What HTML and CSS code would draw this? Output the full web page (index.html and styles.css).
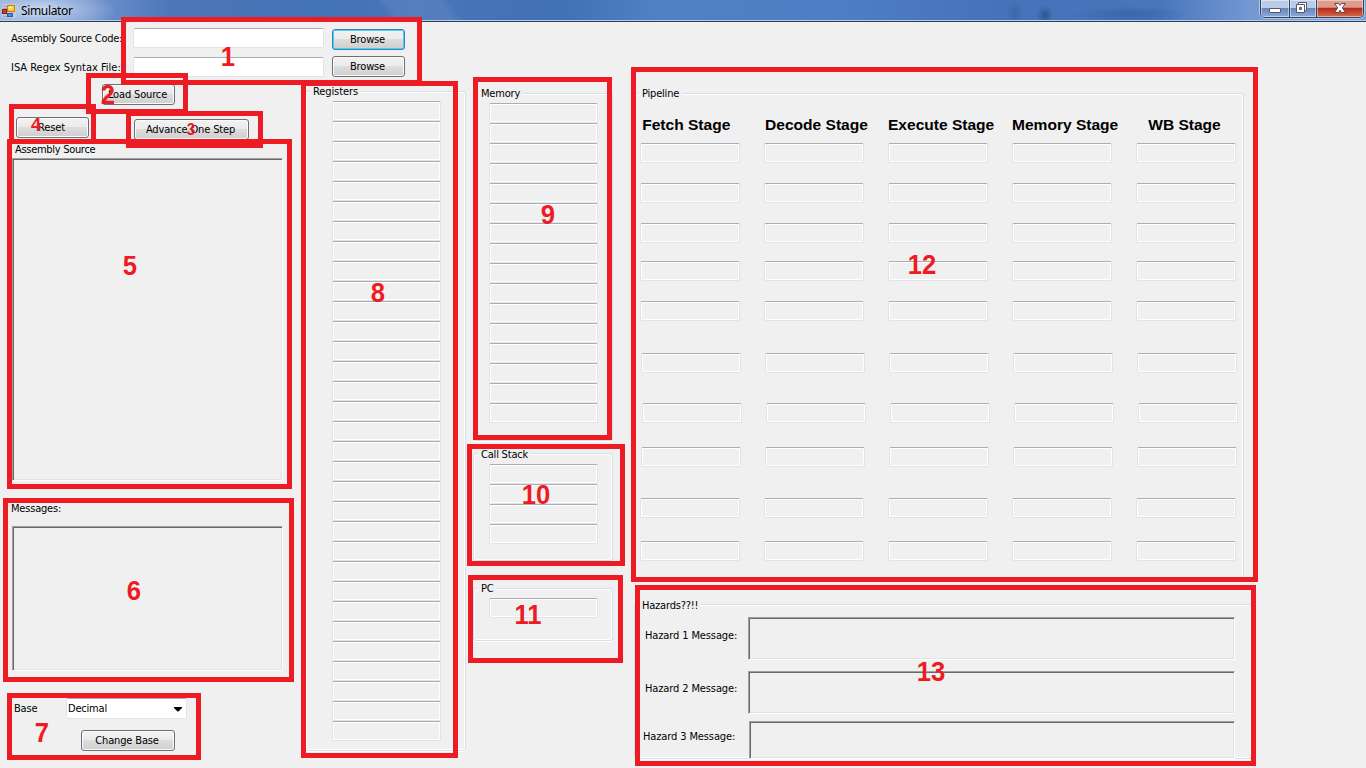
FILE: index.html
```html
<!DOCTYPE html>
<html lang="en">
<head>
<meta charset="utf-8">
<title>Simulator</title>
<link rel="stylesheet" href="styles.css">
</head>
<body>
<header class="titlebar">
  <svg class="app-icon" width="14" height="16" viewBox="0 0 14 16">
    <rect x="0" y="0" width="14" height="14" fill="#c9cdd2" opacity=".75"/>
    <path d="M1 2.500h4M1 4.500h4M1 12.500h4" stroke="#8fa9cc"/>
    <rect x="5.500" y="1.500" width="7" height="6" fill="#ffc928" stroke="#b98512"/>
    <rect x="6.500" y="2.500" width="4" height="2" fill="#fff1a8"/>
    <rect x=".5" y="5.500" width="4" height="4" fill="#d83b2c" stroke="#8c1b16"/>
    <rect x="5.500" y="9.500" width="5" height="3" fill="#4b86e6" stroke="#2b59ad"/>
  </svg>
  <span class="app-title">Simulator</span>
  <div class="window-controls">
    <span class="control minimize"><svg width="28" height="17" viewBox="0 0 28 17"><rect x="8.500" y="8.500" width="11" height="4" rx=".5" fill="#fff" stroke="#555b6c"/></svg></span>
    <span class="control restore"><svg width="26" height="17" viewBox="0 0 26 17"><path d="M8.500 2.500h8v8h-8z" fill="#fff" stroke="#555b6c"/><path d="M6.500 4.500h8v8h-8z" fill="#fff" stroke="#555b6c"/><path d="M9.500 7.500h2v2h-2z" fill="#6e8fc0" stroke="#555b6c"/></svg></span>
    <span class="control close"><svg width="46" height="17" viewBox="0 0 46 17"><path d="M17.500 3.500h4l1.500 2 1.500-2h4l-3.200 4.300 3.200 4.700h-4l-1.500-2.200-1.500 2.200h-4l3.200-4.700z" fill="#fff" stroke="#5b4550"/></svg></span>
  </div>
</header>

<main class="workspace">
  <section class="left-area">
    <div class="file-form">
      <div class="file-row">
        <label class="text file-label source">Assembly Source Code:</label>
        <span class="field file-input"></span>
        <button class="button browse focused">Browse</button>
      </div>
      <div class="file-row">
        <label class="text file-label syntax">ISA Regex Syntax File:</label>
        <span class="field file-input"></span>
        <button class="button browse second">Browse</button>
      </div>
    </div>
    <div class="left-columns">
      <div class="controls">
        <button class="button load">Load Source</button>
        <div class="step-row">
          <button class="button reset">Reset</button>
          <button class="button advance">Advance One Step</button>
        </div>
        <span class="text source-title">Assembly Source</span>
        <div class="sunken source-panel"></div>
        <span class="text messages-title">Messages:</span>
        <div class="sunken messages-panel"></div>
        <div class="base-row">
          <span class="text base-label">Base</span>
          <div class="field combo"><span class="text decimal">Decimal</span><svg width="8" height="5" viewBox="0 0 8 5"><path d="M0 0h8v1L4.500 4.500h-1L0 1z"/></svg></div>
        </div>
        <button class="button change">Change Base</button>
      </div>
      <div class="group registers">
        <span class="text legend">Registers</span>
        <div class="stack" data-fields="32"></div>
      </div>
    </div>
  </section>

  <section class="middle-area">
    <div class="group memory"><span class="text legend">Memory</span><div class="stack" data-fields="16"></div></div>
    <div class="group callstack"><span class="text legend">Call Stack</span><div class="stack" data-fields="4"></div></div>
    <div class="group pc"><span class="text legend">PC</span><div class="stack" data-fields="1"></div></div>
  </section>

  <section class="right-area">
    <div class="group pipeline">
      <span class="text legend">Pipeline</span>
      <div class="stage-names">
        <span class="fetch">Fetch Stage</span><span class="decode">Decode Stage</span><span class="execute">Execute Stage</span><span class="mem">Memory Stage</span><span class="wb">WB Stage</span>
      </div>
      <div class="stage-rows">
        <div class="stage-row"></div>
        <div class="stage-row gap20"></div>
        <div class="stage-row gap20"></div>
        <div class="stage-row gap18"></div>
        <div class="stage-row gap20"></div>
        <div class="stage-row gap32 shift1"></div>
        <div class="stage-row gap30 shift2"></div>
        <div class="stage-row gap24 shift1"></div>
        <div class="stage-row gap31"></div>
        <div class="stage-row gap23"></div>
      </div>
    </div>
    <div class="group hazards">
      <span class="text legend">Hazards??!!</span>
      <div class="hazard-row"><span class="text">Hazard 1 Message:</span><div class="sunken"></div></div>
      <div class="hazard-row"><span class="text">Hazard 2 Message:</span><div class="sunken"></div></div>
      <div class="hazard-row third"><span class="text">Hazard 3 Message:</span><div class="sunken"></div></div>
    </div>
  </section>
</main>

<!-- Numbered callouts over the window -->
<div class="callouts">
  <div class="callout c1"></div><b class="num n1">1</b>
  <div class="callout c2"></div><b class="num n2">2</b>
  <div class="callout c3"></div><b class="num n3">3</b>
  <div class="callout c4"></div><b class="num n4">4</b>
  <div class="callout c5"></div><b class="num n5">5</b>
  <div class="callout c6"></div><b class="num n6">6</b>
  <div class="callout c7"></div><b class="num n7">7</b>
  <div class="callout c8"></div><b class="num n8">8</b>
  <div class="callout c9"></div><b class="num n9">9</b>
  <div class="callout c10"></div><b class="num n10">10</b>
  <div class="callout c11"></div><b class="num n11">11</b>
  <div class="callout c12"></div><b class="num n12">12</b>
  <div class="callout c13"></div><b class="num n13">13</b>
</div>
<script src="fields.js"></script>
</body>
</html>
```
FILE: fields.js
```js
function addFields(parent, count) {
  for (let i = 0; i < count; i++) {
    const field = document.createElement('span');
    field.className = 'field';
    parent.appendChild(field);
  }
}
document.querySelectorAll('.stack').forEach(el => addFields(el, Number(el.dataset.fields)));
document.querySelectorAll('.stage-row').forEach(el => addFields(el, 5));
```
FILE: styles.css
```css
* { box-sizing: border-box; }
body {
  margin: 0;
  width: 1366px;
  height: 768px;
  overflow: hidden;
  position: relative;
  background: #f0f0f0;
  color: #000;
  font: 11px/14px "DejaVu Sans Condensed", "DejaVu Sans", sans-serif;
}

/* Title bar */
.titlebar {
  display: flex;
  height: 22px;
  padding-left: 2px;
  border-bottom: 1px solid #2c3c5c;
  box-shadow: inset 0 -1px #bccbe4;
  background:
    radial-gradient(ellipse 75px 22px at 42px 10px, rgba(225,234,248,.8), rgba(200,216,240,.45) 50%, transparent),
    radial-gradient(ellipse 8px 9px at 1045px 15px, rgba(36,75,135,.8), transparent),
    radial-gradient(ellipse 8px 12px at 1015px 12px, rgba(50,90,155,.5), transparent),
    radial-gradient(ellipse 60px 8px at 1130px 14px, rgba(48,91,158,.6), transparent),
    linear-gradient(55deg, transparent 320px, rgba(255,255,255,.07) 328px 372px, transparent 380px),
    linear-gradient(90deg, #8facdc 0, #7093cd 90px, #4c77b8 170px, #4472b7 320px, #4874ba 420px, #4270b5 560px, #5280c5 660px, #4f7dc3 850px, #4572b8 1000px, #4875bb 1160px, #7398d2 1250px, #7da0d8 1366px);
}
.app-icon { margin-top: 4px; flex: none; }
.app-title {
  margin: 3px 0 0 5px;
  font: 12px/16px "Noto Sans", sans-serif;
  letter-spacing: -.35px;
}
.window-controls {
  display: flex;
  width: 104px;
  height: 18px;
  margin: 0 2px 0 auto;
  border: 1px solid #35425f;
  border-top: 0;
  border-radius: 0 0 5px 5px;
  overflow: hidden;
  box-shadow: 0 0 0 1px rgba(205,221,245,.65);
}
.control {
  box-shadow: inset 0 0 0 1px rgba(255,255,255,.45);
  background: linear-gradient(#b9cbe6 0 45%, #6588bb 50%, #8dabd8);
}
.control svg { display: block; }
.minimize { width: 28px; }
.restore { width: 27px; border-left: 1px solid #35425f; }
.close { width: 47px; border-left: 1px solid #35425f; background: linear-gradient(#dd9c8c 0 42%, #b92c1b 50%, #d36b4c); }

/* Shared controls */
.text { white-space: nowrap; letter-spacing: -.2px; }
.field {
  display: block;
  height: 20px;
  border: 1px solid #e2e3ea;
  border-top-color: #abadb3;
  border-radius: 2px;
  box-shadow: inset 0 0 0 1px #fff;
}
.button {
  display: block;
  width: 73px;
  height: 21px;
  padding: 1px 2px 0 0;
  border: 1px solid #707070;
  border-radius: 3px;
  box-shadow: inset 0 0 0 1px #fafafa;
  background: linear-gradient(#f2f2f2, #ebebeb 48%, #dddddd 50%, #cfcfcf);
  color: #000;
  font: inherit;
  letter-spacing: -.15px;
  line-height: 18px;
  text-align: center;
}
.focused { border-color: #3c7fb1; box-shadow: inset 0 0 0 1px #48d1f5; }
.sunken {
  border: 1px solid;
  border-color: #a0a0a0 #fff #fff #a0a0a0;
  box-shadow: inset 1px 1px #696969, inset -1px -1px #e3e3e3;
}
.group {
  position: relative;
  border: 1px solid #d5dfe5;
  border-radius: 3px;
  box-shadow: inset 0 0 0 1px #fff, 0 1px #fff;
}
.legend {
  position: absolute;
  top: -7px;
  left: 4px;
  padding: 0 3px;
  background: #f0f0f0;
}

/* Window body */
.workspace { display: flex; height: 746px; }
.left-area { width: 473px; }
.file-form { height: 62px; padding: 6px 0 0 11px; }
.file-row { display: flex; height: 29px; }
.file-label { width: 122px; padding-top: 4px; }
.source { letter-spacing: -.26px; }
.syntax { letter-spacing: -.02px; }
.file-input { width: 191px; margin-right: 8px; background: #fff; }
.browse { margin-top: 1px; }
.second { margin-top: -1px; }
.left-columns { display: flex; height: 684px; }
.controls { width: 305px; }
.load { margin-left: 102px; }
.step-row { display: flex; height: 37px; padding: 12px 0 0 16px; }
.advance { width: 115px; margin: 2px 0 0 45px; }
.source-title, .messages-title { display: block; height: 16px; margin-left: 15px; padding-top: 1px; }
.source-title { letter-spacing: -.3px; }
.source-panel { width: 271px; height: 323px; margin-left: 12px; }
.messages-title { height: 25px; margin: 20px 0 0 11px; }
.messages-panel { width: 271px; height: 145px; margin-left: 12px; }
.base-row { display: flex; margin: 27px 0 0 14px; }
.base-label { width: 52px; padding-top: 4px; }
.combo { display: flex; align-items: center; justify-content: space-between; width: 121px; height: 21px; padding: 0 4px 0 1px; background: #fff; }
.combo svg { margin-top: 2px; }
.change { width: 94px; margin: 11px 0 0 81px; }

.stack .field { width: 109px; }
.registers { width: 161px; height: 660px; margin-top: 7px; padding: 9px 0 0 26px; }
.registers .legend { letter-spacing: -.1px; }
.middle-area { width: 161px; padding-top: 71px; }
.middle-area .group { width: 140px; padding: 9px 0 0 15px; }
.memory { height: 348px; }
.middle-area .callstack { height: 108px; margin-top: 12px; padding-top: 10px; }
.callstack .legend { top: -6px; }
.pc { height: 53px; margin-top: 27px; }

.right-area { width: 620px; padding-top: 71px; }
.pipeline { width: 610px; height: 486px; padding: 23px 0 0 5px; }
.stage-names {
  display: grid;
  grid-template-columns: repeat(5, 124px);
  height: 26px;
  font: bold 14px/16px "Liberation Sans", sans-serif;
  white-space: nowrap;
}
.stage-names span { padding-left: 2px; transform: scaleX(1.11); transform-origin: 0 0; }
.stage-names .decode { padding-left: 1px; }
.stage-names .execute, .stage-names .mem { padding-left: 0; }
.stage-names .wb { padding-left: 11px; }
.stage-row { display: flex; gap: 24px; }
.stage-row .field { width: 100px; }
.gap18 { margin-top: 18px; }
.gap20 { margin-top: 20px; }
.gap23 { margin-top: 23px; }
.gap24 { margin-top: 24px; }
.gap30 { margin-top: 30px; }
.gap31 { margin-top: 31px; }
.gap32 { margin-top: 32px; }
.shift1 { padding-left: 1px; }
.shift2 { padding-left: 2px; }
.hazards { width: 618px; height: 155px; margin-top: 25px; padding: 12px 0 0 10px; }
.hazards .legend { top: -6px; }
.hazard-row { display: flex; margin-bottom: 11px; }
.hazard-row .text { width: 103px; padding-top: 12px; letter-spacing: -.12px; }
.hazard-row .sunken { width: 487px; height: 43px; }
.hazard-row:nth-of-type(2) .text { padding-top: 11px; }
.third { margin: -4px 0 0 -2px; }
.third .text { width: 106px; padding-top: 9px; }
.third .sunken { width: 486px; height: 38px; }

/* Callouts */
.callouts { position: absolute; inset: 0; }
.callout { position: absolute; border: 5px solid #ed1c24; }
.c1 { left: 121px; top: 17px; width: 301px; height: 68px; }
.c2 { left: 86px; top: 73px; width: 102px; height: 41px; }
.c3 { left: 126px; top: 111px; width: 137px; height: 37px; }
.c4 { left: 9px; top: 104px; width: 87px; height: 40px; }
.c5 { left: 7px; top: 139px; width: 285px; height: 350px; }
.c6 { left: 3px; top: 498px; width: 291px; height: 184px; }
.c7 { left: 7px; top: 693px; width: 194px; height: 67px; }
.c8 { left: 301px; top: 81px; width: 157px; height: 677px; }
.c9 { left: 473px; top: 77px; width: 139px; height: 363px; }
.c10 { left: 467px; top: 444px; width: 158px; height: 122px; }
.c11 { left: 468px; top: 575px; width: 155px; height: 88px; }
.c12 { left: 631px; top: 67px; width: 627px; height: 515px; }
.c13 { left: 635px; top: 585px; width: 621px; height: 181px; }
.num {
  position: absolute;
  width: 40px;
  text-align: center;
  color: #ed1c24;
  font: bold 27px/30px "Liberation Sans", sans-serif;
  transform: scaleX(.95);
}
.n1 { left: 208px; top: 42px; }
.n2 { left: 88px; top: 80px; }
.n3 { left: 171px; top: 115px; font-size: 16px; }
.n4 { left: 16px; top: 110px; font-size: 19px; }
.n5 { left: 110px; top: 251px; }
.n6 { left: 114px; top: 576px; }
.n7 { left: 22px; top: 718px; }
.n8 { left: 358px; top: 278px; }
.n9 { left: 528px; top: 200px; }
.n10 { left: 516px; top: 480px; }
.n11 { left: 508px; top: 600px; }
.n12 { left: 902px; top: 250px; }
.n13 { left: 911px; top: 657px; }
```
